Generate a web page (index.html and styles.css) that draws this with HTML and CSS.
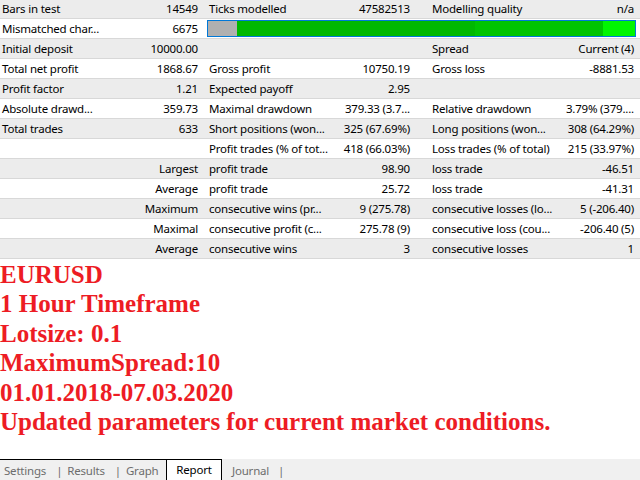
FILE: index.html
```html
<!DOCTYPE html>
<html lang="en">
<head>
    <meta charset="UTF-8">
    <title>Report</title>
    <link rel="stylesheet" href="styles.css">
</head>
<body>
    <!-- tabla de resultados -->
    <div class="report">
        <div class="row">
            <div class="grp g1"><span>Bars in test</span><span>14549</span></div>
            <div class="grp g2"><span>Ticks modelled</span><span>47582513</span></div>
            <div class="grp g3"><span>Modelling quality</span><span>n/a</span></div>
        </div>
        <div class="row">
            <div class="grp g1"><span>Mismatched char...</span><span>6675</span></div>
            <div class="bar">
                <div class="seg gris"></div>
                <div class="seg verde"></div>
                <div class="seg verde2"></div>
                <div class="seg lima"></div>
            </div>
        </div>
        <div class="row">
            <div class="grp g1"><span>Initial deposit</span><span>10000.00</span></div>
            <div class="grp g2"><span></span><span></span></div>
            <div class="grp g3"><span>Spread</span><span>Current (4)</span></div>
        </div>
        <div class="row">
            <div class="grp g1"><span>Total net profit</span><span>1868.67</span></div>
            <div class="grp g2"><span>Gross profit</span><span>10750.19</span></div>
            <div class="grp g3"><span>Gross loss</span><span>-8881.53</span></div>
        </div>
        <div class="row">
            <div class="grp g1"><span>Profit factor</span><span>1.21</span></div>
            <div class="grp g2"><span>Expected payoff</span><span>2.95</span></div>
            <div class="grp g3"><span></span><span></span></div>
        </div>
        <div class="row">
            <div class="grp g1"><span>Absolute drawd...</span><span>359.73</span></div>
            <div class="grp g2"><span>Maximal drawdown</span><span>379.33 (3.7...</span></div>
            <div class="grp g3"><span>Relative drawdown</span><span>3.79% (379....</span></div>
        </div>
        <div class="row">
            <div class="grp g1"><span>Total trades</span><span>633</span></div>
            <div class="grp g2"><span>Short positions (won...</span><span>325 (67.69%)</span></div>
            <div class="grp g3"><span>Long positions (won...</span><span>308 (64.29%)</span></div>
        </div>
        <div class="row">
            <div class="grp g1"><span></span><span></span></div>
            <div class="grp g2"><span>Profit trades (% of tot...</span><span>418 (66.03%)</span></div>
            <div class="grp g3"><span>Loss trades (% of total)</span><span>215 (33.97%)</span></div>
        </div>
        <div class="row">
            <div class="grp g1"><span></span><span>Largest</span></div>
            <div class="grp g2"><span>profit trade</span><span>98.90</span></div>
            <div class="grp g3"><span>loss trade</span><span>-46.51</span></div>
        </div>
        <div class="row">
            <div class="grp g1"><span></span><span>Average</span></div>
            <div class="grp g2"><span>profit trade</span><span>25.72</span></div>
            <div class="grp g3"><span>loss trade</span><span>-41.31</span></div>
        </div>
        <div class="row">
            <div class="grp g1"><span></span><span>Maximum</span></div>
            <div class="grp g2"><span>consecutive wins (pr...</span><span>9 (275.78)</span></div>
            <div class="grp g3"><span>consecutive losses (lo...</span><span>5 (-206.40)</span></div>
        </div>
        <div class="row">
            <div class="grp g1"><span></span><span>Maximal</span></div>
            <div class="grp g2"><span>consecutive profit (c...</span><span>275.78 (9)</span></div>
            <div class="grp g3"><span>consecutive loss (cou...</span><span>-206.40 (5)</span></div>
        </div>
        <div class="row">
            <div class="grp g1"><span></span><span>Average</span></div>
            <div class="grp g2"><span>consecutive wins</span><span>3</span></div>
            <div class="grp g3"><span>consecutive losses</span><span>1</span></div>
        </div>
    </div>

    <!-- notas en rojo -->
    <div class="notas">
        <p>EURUSD</p>
        <p>1 Hour Timeframe</p>
        <p>Lotsize: 0.1</p>
        <p>MaximumSpread:10</p>
        <p>01.01.2018-07.03.2020</p>
        <p>Updated parameters for current market conditions.</p>
    </div>

    <!-- pestañas -->
    <div class="tabs">
        <div class="izq">
            <span>Settings</span><span class="sep">|</span>
            <span>Results</span><span class="sep">|</span>
            <span>Graph</span>
        </div>
        <div class="activa">Report</div>
        <div class="der">
            <span>Journal</span><span class="sep">|</span>
        </div>
    </div>
</body>
</html>
```

FILE: styles.css
```css
body {
    margin: 0;
    width: 640px;
    height: 480px;
    overflow: hidden;
    background-color: #fff;
    display: flex;
    flex-direction: column;
}
.report {
    margin-top: -1px;
    font-family: 'Noto Sans', sans-serif;
    font-size: 11.5px;
    letter-spacing: -0.2px;
    color: #000;
}
.row {
    display: flex;
    height: 20px;
    box-sizing: border-box;
    border-bottom: 1px solid #d8d8d8;
    align-items: center;
    white-space: nowrap;
}
.row:nth-child(odd) {
    background-color: #ececec;
}
.grp {
    display: flex;
    justify-content: space-between;
    box-sizing: border-box;
}
.g1 {
    width: 204px;
    padding: 0 6px 0 2px;
}
.g2 {
    width: 212px;
    padding: 0 6px 0 5px;
}
.g3 {
    width: 224px;
    padding: 0 6px 0 16px;
}
.bar {
    display: flex;
    margin-left: 3px;
    width: 429px;
    height: 17px;
    box-sizing: border-box;
    border: 1px solid #0078d7;
}
.seg {
    height: 100%;
}
.gris {
    width: 29px;
    background-color: #b0b0b0;
}
.verde {
    width: 238px;
    background-color: #00b800;
}
.verde2 {
    width: 128px;
    background-color: #00c400;
}
.lima {
    flex: 1;
    background-color: #00f500;
}
.notas {
    flex: 1;
    color: #ed1c24;
    font-family: 'Liberation Serif', serif;
    font-weight: bold;
    font-size: 25px;
    line-height: 29.4px;
    padding-top: 1px;
    white-space: nowrap;
}
.notas p {
    margin: 0;
}
.tabs {
    height: 21px;
    background-color: #f0f0f0;
    font-family: 'Noto Sans', sans-serif;
    font-size: 11.5px;
    letter-spacing: -0.2px;
    color: #6d6d6d;
    display: flex;
}
.izq {
    width: 166px;
    box-sizing: border-box;
    border-top: 1px solid #000;
    padding-left: 4px;
    display: flex;
    align-items: center;
}
.sep {
    margin: 0 5px 0 10px;
}
.activa {
    width: 56px;
    box-sizing: border-box;
    color: #000;
    background-color: #fff;
    border: 1px solid #000;
    border-bottom: none;
    text-align: center;
    line-height: 20px;
}
.der {
    padding-left: 10px;
    display: flex;
    align-items: center;
    padding-top: 1px;
}
.der .sep {
    margin-left: 9px;
}
```
